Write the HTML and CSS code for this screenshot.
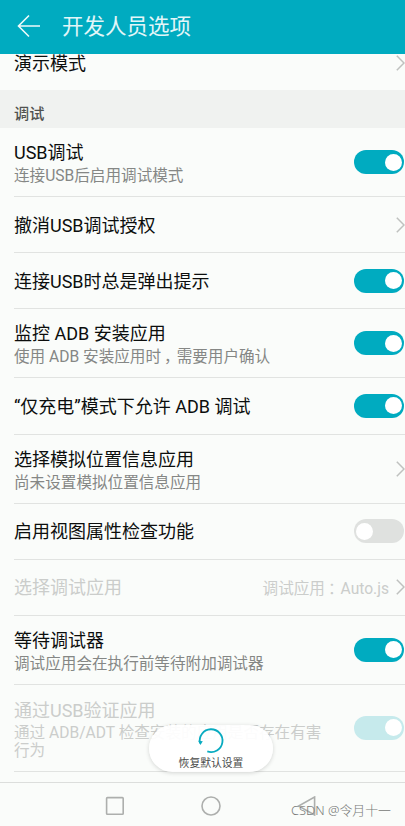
FILE: index.html
```html
<!DOCTYPE html>
<html lang="zh-CN">
<head>
<meta charset="utf-8">
<title>开发人员选项</title>
<link rel="stylesheet" href="styles.css">
</head>
<body>
<div class="screen">
  <header class="bar">
    <svg class="back" width="24" height="24" viewBox="0 0 24 24"><path d="M12 1.5 1.5 12 12 22.5M1.5 12H23"/></svg>
    <h1>开发人员选项</h1>
  </header>
  <main class="list">
    <div class="row first"><div class="text"><div class="title">演示模式</div></div><svg class="chev" viewBox="0 0 9 16"><path d="M.8.8 8 8 .8 15.2"/></svg></div>
    <h2 class="section">调试</h2>
    <div class="row two"><div class="text"><div class="title">USB调试</div><div class="sub">连接USB后启用调试模式</div></div><span class="switch"></span></div>
    <div class="row"><div class="text"><div class="title">撤消USB调试授权</div></div><svg class="chev" viewBox="0 0 9 16"><path d="M.8.8 8 8 .8 15.2"/></svg></div>
    <div class="row"><div class="text"><div class="title">连接USB时总是弹出提示</div></div><span class="switch"></span></div>
    <div class="row two"><div class="text"><div class="title">监控 ADB 安装应用</div><div class="sub">使用 ADB 安装应用时<span class="punct">，</span>需要用户确认</div></div><span class="switch"></span></div>
    <div class="row"><div class="text"><div class="title">“仅充电”模式下允许 ADB 调试</div></div><span class="switch"></span></div>
    <div class="row two"><div class="text"><div class="title">选择模拟位置信息应用</div><div class="sub">尚未设置模拟位置信息应用</div></div><svg class="chev" viewBox="0 0 9 16"><path d="M.8.8 8 8 .8 15.2"/></svg></div>
    <div class="row"><div class="text"><div class="title">启用视图属性检查功能</div></div><span class="switch off"></span></div>
    <div class="row disabled"><div class="text"><div class="title">选择调试应用</div></div><div class="value">调试应用<span class="punct">：</span>Auto.js</div><svg class="chev" viewBox="0 0 9 16"><path d="M.8.8 8 8 .8 15.2"/></svg></div>
    <div class="row two"><div class="text"><div class="title">等待调试器</div><div class="sub">调试应用会在执行前等待附加调试器</div></div><span class="switch"></span></div>
    <div class="row three disabled"><div class="text"><div class="title">通过USB验证应用</div><div class="sub">通过 ADB/ADT 检查安装的应用是否存在有害<br>行为</div></div><span class="switch"></span></div>
  </main>
  <button class="reset">
    <svg width="26" height="26" viewBox="0 0 26 26"><path d="M9.3 24.4A11.4 11.4 0 1 0 2 16.2" class="arc"/><path d="M.2 13.8 4.8 14.3 2.4 18Z" class="tip"/></svg>
    <span>恢复默认设置</span>
  </button>
  <nav class="nav">
    <svg viewBox="0 0 20 20"><rect x="1.6" y="1.6" width="16.6" height="16.6" rx=".8"/></svg>
    <svg viewBox="0 0 20 20"><circle cx="10" cy="10" r="9"/></svg>
    <svg viewBox="0 0 20 20"><path d="M17.6 1V19L1.5 10Z"/></svg>
  </nav>
  <div class="watermark">CSDN @令月十一</div>
</div>
</body>
</html>
```
FILE: styles.css
```css
* { box-sizing: border-box; }
body { margin: 0; background: #fafcfa; }
.screen {
  position: relative;
  display: flex;
  flex-direction: column;
  width: 405px;
  height: 826px;
  overflow: hidden;
  font-family: Roboto, "Noto Sans CJK SC", sans-serif;
  color: #0c0e0d;
}
.bar {
  display: flex;
  align-items: center;
  flex: none;
  height: 54px;
  padding: 0 0 3px 17px;
  background: #00abc0;
}
.back { fill: none; stroke: #eefafa; stroke-width: 1.6; }
.bar h1 {
  margin: 2px 0 0 21px;
  font-size: 21.5px;
  line-height: 30px;
  font-weight: 400;
  color: #e2f6f8;
}
.list { flex: none; height: 728px; overflow: hidden; }
.row {
  display: flex;
  align-items: center;
  height: 56.2px;
  margin-left: 14px;
  padding-right: 1px;
  border-bottom: 1px solid #e1e3e1;
}
.first { height: 36px; border: 0; padding-bottom: 19px; }
.section {
  margin: 0;
  height: 38px;
  padding: 10px 14px 0;
  background: #f0f2f0;
  font-size: 15.2px;
  line-height: 28px;
  font-weight: 500;
  color: #505250;
}
.two { height: 69px; }
.three { height: 87px; }
.text { flex: 1; padding-top: 1px; white-space: nowrap; }
.title { font-size: 18px; line-height: 25px; }
.two .text, .three .text { padding-top: 3px; }
.sub { font-size: 15.6px; line-height: 22px; color: #858785; }
.three .sub { line-height: 18px; }
.three .title { line-height: 26px; }
.value { margin-right: 7px; font-size: 15.6px; white-space: nowrap; }
.punct { padding-left: 3px; letter-spacing: -3px; }
.disabled .title, .disabled .sub, .disabled .value { color: #cbcdcb; }
.chev {
  flex: none;
  width: 9px;
  height: 16px;
  margin-right: -1px;
  fill: none;
  stroke: #bfc1bf;
  stroke-width: 1.5;
}
.switch {
  display: flex;
  justify-content: flex-end;
  align-items: center;
  flex: none;
  width: 50px;
  height: 24px;
  padding: 0 2px;
  border-radius: 12px;
  background: #00abc0;
}
.switch::after {
  content: "";
  width: 17px;
  height: 17px;
  border-radius: 50%;
  background: #fff;
}
.switch.off { justify-content: flex-start; background: #dfe1df; }
.disabled .switch { background: #c6eaec; }
.reset {
  position: absolute;
  left: 149px;
  top: 725px;
  display: flex;
  flex-direction: column;
  align-items: center;
  width: 124px;
  height: 47px;
  padding: 2px 0 0;
  border: 0;
  border-radius: 24px;
  background: rgba(255, 255, 255, .93);
  box-shadow: 0 1px 4px rgba(0, 0, 0, .16);
  font: 10.8px/16px Roboto, "Noto Sans CJK SC", sans-serif;
  color: #484a48;
}
.reset svg { display: block; flex: none; overflow: visible; }
.reset span { margin-top: 3px; }
.arc { fill: none; stroke: #08abc0; stroke-width: 1.8; }
.tip { fill: #08abc0; }
.nav {
  display: flex;
  justify-content: center;
  align-items: center;
  gap: 76px;
  flex: 1;
  padding: 3px 0 0 17px;
  border-top: 1px solid #dcdedc;
}
.nav svg { width: 20px; height: 20px; fill: none; stroke: #adafad; stroke-width: 1.6; }
.watermark {
  position: absolute;
  left: 291px;
  top: 801px;
  font: 300 12.9px/18px "Noto Sans", "Noto Sans CJK SC", sans-serif;
  color: #777977;
  white-space: nowrap;
}
```
